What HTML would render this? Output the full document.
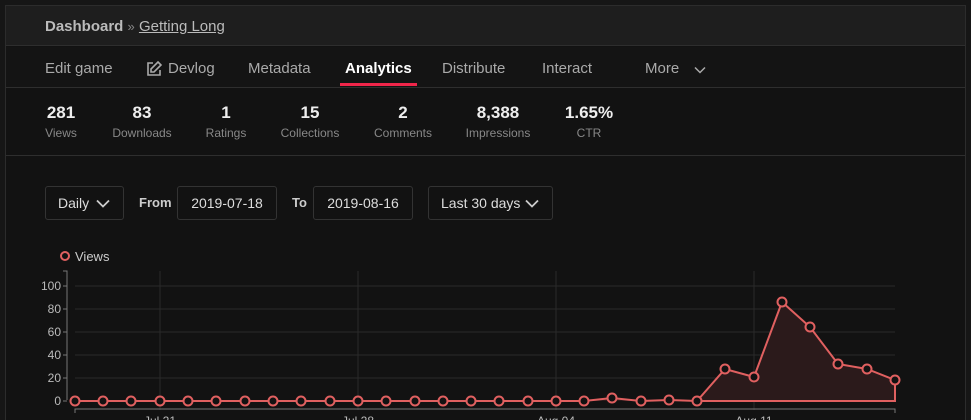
<!DOCTYPE html>
<html><head><meta charset="utf-8"><style>
*{margin:0;padding:0;box-sizing:border-box}
html,body{width:971px;height:420px;overflow:hidden}
body{background:#161616;font-family:"Liberation Sans",sans-serif;position:relative}
.panel{position:absolute;left:5px;top:5px;width:961px;height:415px;border:1px solid #2c2c2c;border-bottom:none;background:#121212}
.hdr{position:absolute;left:0;top:0;width:100%;height:40px;background:#1e1e1e;border-bottom:1px solid #2e2e2e}
.nav{position:absolute;left:0;top:41px;width:100%;height:41px;background:#141414;border-bottom:1px solid #2e2e2e}
.stats{position:absolute;left:0;top:83px;width:100%;height:67px;border-bottom:1px solid #2e2e2e}
.a{position:absolute;white-space:nowrap}
.n{color:#aaa;font-size:15px}
.s{position:absolute;text-align:center;width:100px;margin-left:-50px}
.s b{display:block;color:#eee;font-size:17px;top:0}
.s span{display:block;color:#888;font-size:12px;margin-top:3px}
.box{position:absolute;top:186px;height:34px;border:1px solid #333;border-radius:3px;color:#ddd;font-size:14px;line-height:32px;padding:0 12px;white-space:nowrap}
.box svg{position:absolute;top:12px}
.lb{position:absolute;top:195px;color:#ccc;font-size:13px;font-weight:bold}
</style></head><body>
<div class="panel">
<div class="hdr"><div class="a" style="left:39px;top:12px;font-size:15px;color:#bbb"><b>Dashboard</b> <span style="color:#888;font-size:13px">»</span> <span style="text-decoration:underline;color:#bbb">Getting Long</span></div></div>
<div class="nav">
<div class="a n" style="left:39px;top:13px">Edit game</div>
<svg class="a" style="left:139px;top:13px" width="18" height="18" viewBox="0 0 18 18" fill="none" stroke="#aaa" stroke-width="1.6"><path d="M8 3H3v12h12v-5"/><path d="M13 2l3 3-7 7H6V9z"/></svg>
<div class="a n" style="left:162px;top:13px">Devlog</div>
<div class="a n" style="left:242px;top:13px">Metadata</div>
<div class="a" style="left:339px;top:13px;font-size:15px;font-weight:bold;color:#fff">Analytics</div>
<div class="a" style="left:334px;top:36px;width:77px;height:3px;background:#f0264a"></div>
<div class="a n" style="left:436px;top:13px">Distribute</div>
<div class="a n" style="left:536px;top:13px">Interact</div>
<div class="a n" style="left:639px;top:13px">More</div>
<svg class="a" style="left:688px;top:19px" width="12" height="8" viewBox="0 0 12 8"><path d="M1 1.5l5 5 5-5" fill="none" stroke="#aaa" stroke-width="1.5"/></svg>
</div>
<div class="stats">
<div class="s" style="left:55px;top:14px"><b>281</b><span>Views</span></div>
<div class="s" style="left:136px;top:14px"><b>83</b><span>Downloads</span></div>
<div class="s" style="left:220px;top:14px"><b>1</b><span>Ratings</span></div>
<div class="s" style="left:304px;top:14px"><b>15</b><span>Collections</span></div>
<div class="s" style="left:397px;top:14px"><b>2</b><span>Comments</span></div>
<div class="s" style="left:492px;top:14px"><b>8,388</b><span>Impressions</span></div>
<div class="s" style="left:583px;top:14px"><b>1.65%</b><span>CTR</span></div>
</div>
</div>
<div class="box" style="left:45px;width:79px">Daily<svg style="left:50px" width="14" height="9" viewBox="0 0 14 9"><path d="M1 1.5l6 6 6-6" fill="none" stroke="#ccc" stroke-width="1.8"/></svg></div>
<div class="lb" style="left:139px">From</div>
<div class="box" style="left:177px;width:100px;text-align:center">2019-07-18</div>
<div class="lb" style="left:292px">To</div>
<div class="box" style="left:313px;width:100px;text-align:center">2019-08-16</div>
<div class="box" style="left:428px;width:125px">Last 30 days<svg style="left:96px" width="14" height="9" viewBox="0 0 14 9"><path d="M1 1.5l6 6 6-6" fill="none" stroke="#ccc" stroke-width="1.8"/></svg></div>
<svg class="a" style="left:0;top:0" width="971" height="420">
<circle cx="65" cy="256" r="4" fill="none" stroke="#e06060" stroke-width="2"/>
<text x="75" y="261" fill="#ccc" font-size="13" font-family="Liberation Sans">Views</text>
<g stroke="#2a2a2a" stroke-width="1">
<line x1="75" y1="286" x2="895" y2="286"/><line x1="75" y1="309" x2="895" y2="309"/><line x1="75" y1="332" x2="895" y2="332"/><line x1="75" y1="355" x2="895" y2="355"/><line x1="75" y1="378" x2="895" y2="378"/>
<line x1="160" y1="271" x2="160" y2="410"/><line x1="358" y1="271" x2="358" y2="410"/><line x1="556" y1="271" x2="556" y2="410"/><line x1="754" y1="271" x2="754" y2="410"/>
</g>
<g stroke="#777" fill="none"><path d="M63 271H67V400"/><path d="M75 413V409H895V413"/>
<path d="M63 286H67M63 309H67M63 332H67M63 355H67M63 378H67M63 401H67"/></g>
<g fill="#bbb" font-size="12" font-family="Liberation Sans" text-anchor="end">
<text x="61" y="290">100</text><text x="61" y="313">80</text><text x="61" y="336">60</text><text x="61" y="359">40</text><text x="61" y="382">20</text><text x="61" y="405">0</text></g>
<g fill="#bbb" font-size="12" font-family="Liberation Sans" text-anchor="middle">
<text x="160" y="425">Jul 21</text><text x="358" y="425">Jul 28</text><text x="556" y="425">Aug 04</text><text x="754" y="425">Aug 11</text></g>
<path d="M75 401 L584 401 612 398 641 401 669 400 697 401 725 369 754 377 782 302 810 327 838 364 867 369 895 380 V401Z" fill="#2b1a1b"/>
<polyline points="75,401 584,401 612,398 641,401 669,400 697,401 725,369 754,377 782,302 810,327 838,364 867,369 895,380 895,401 697,401" fill="none" stroke="#e06060" stroke-width="2"/>
<g fill="#121212" stroke="#e06060" stroke-width="2">
<circle cx="75" cy="401" r="4.5"/><circle cx="103" cy="401" r="4.5"/><circle cx="131" cy="401" r="4.5"/><circle cx="160" cy="401" r="4.5"/><circle cx="188" cy="401" r="4.5"/><circle cx="216" cy="401" r="4.5"/><circle cx="245" cy="401" r="4.5"/><circle cx="273" cy="401" r="4.5"/><circle cx="301" cy="401" r="4.5"/><circle cx="330" cy="401" r="4.5"/><circle cx="358" cy="401" r="4.5"/><circle cx="386" cy="401" r="4.5"/><circle cx="415" cy="401" r="4.5"/><circle cx="443" cy="401" r="4.5"/><circle cx="471" cy="401" r="4.5"/><circle cx="499" cy="401" r="4.5"/><circle cx="528" cy="401" r="4.5"/><circle cx="556" cy="401" r="4.5"/><circle cx="584" cy="401" r="4.5"/><circle cx="612" cy="398" r="4.5"/><circle cx="641" cy="401" r="4.5"/><circle cx="669" cy="400" r="4.5"/><circle cx="697" cy="401" r="4.5"/><circle cx="725" cy="369" r="4.5"/><circle cx="754" cy="377" r="4.5"/><circle cx="782" cy="302" r="4.5"/><circle cx="810" cy="327" r="4.5"/><circle cx="838" cy="364" r="4.5"/><circle cx="867" cy="369" r="4.5"/><circle cx="895" cy="380" r="4.5"/>
</g>
</svg>
</body></html>
